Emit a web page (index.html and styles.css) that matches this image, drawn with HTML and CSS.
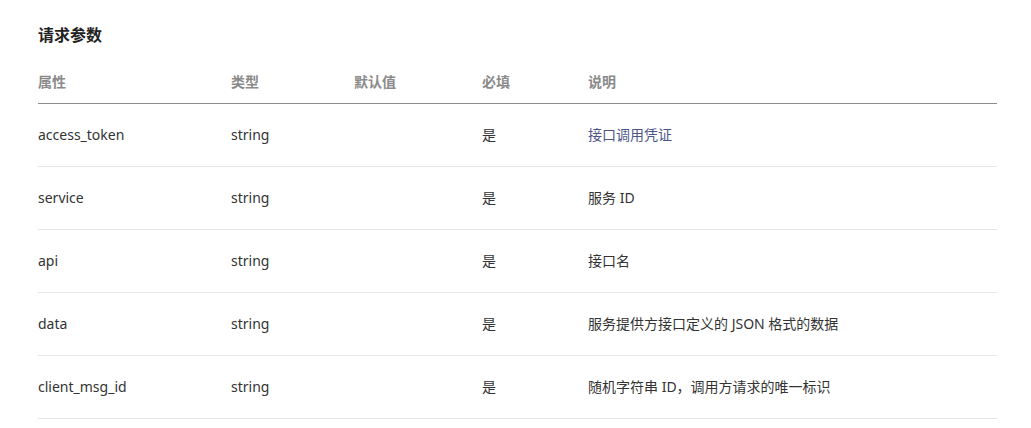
FILE: index.html
```html
<!DOCTYPE html>
<html lang="zh-CN">
<head>
<meta charset="utf-8">
<link rel="stylesheet" href="styles.css">
</head>
<body>
<div class="page">
  <h3 class="title">请求参数</h3>
  <div class="table">
    <div class="row head">
      <div class="c1">属性</div><div class="c2">类型</div><div class="c3">默认值</div><div class="c4">必填</div><div class="c5">说明</div>
    </div>
    <div class="row">
      <div class="c1">access_token</div><div class="c2">string</div><div class="c3"></div><div class="c4">是</div><div class="c5 link">接口调用凭证</div>
    </div>
    <div class="row">
      <div class="c1">service</div><div class="c2">string</div><div class="c3"></div><div class="c4">是</div><div class="c5">服务 ID</div>
    </div>
    <div class="row">
      <div class="c1">api</div><div class="c2">string</div><div class="c3"></div><div class="c4">是</div><div class="c5">接口名</div>
    </div>
    <div class="row">
      <div class="c1">data</div><div class="c2">string</div><div class="c3"></div><div class="c4">是</div><div class="c5">服务提供方接口定义的 JSON 格式的数据</div>
    </div>
    <div class="row">
      <div class="c1">client_msg_id</div><div class="c2">string</div><div class="c3"></div><div class="c4">是</div><div class="c5">随机字符串 ID，调用方请求的唯一标识</div>
    </div>
  </div>
</div>
</body>
</html>
```

FILE: styles.css
```css
html, body {
  margin: 0;
  padding: 0;
  background: #fff;
}
body {
  font-family: "Noto Sans", "Noto Sans CJK SC", sans-serif;
  font-size: 14px;
  color: #333;
}
.page {
  padding: 23px 0 0 38px;
  width: 959px;
}
.title {
  margin: 0 0 14px 0;
  font-size: 16px;
  line-height: 24px;
  font-weight: bold;
  color: #222;
}
.table {
  display: flex;
  flex-direction: column;
}
.row {
  box-sizing: border-box;
  display: flex;
  align-items: center;
  height: 63px;
  padding-bottom: 2px;
  border-bottom: 1px solid #e6e6e6;
}
.row.head {
  height: 43px;
  border-bottom: 1px solid #8c8c8c;
  color: #8a8a8a;
  font-weight: bold;
}
.c1 { width: 193px; }
.c2 { width: 123px; }
.c3 { width: 128px; }
.c4 { width: 106px; }
.c5 { flex: 1; }
.link { color: #4d5488; }
```
